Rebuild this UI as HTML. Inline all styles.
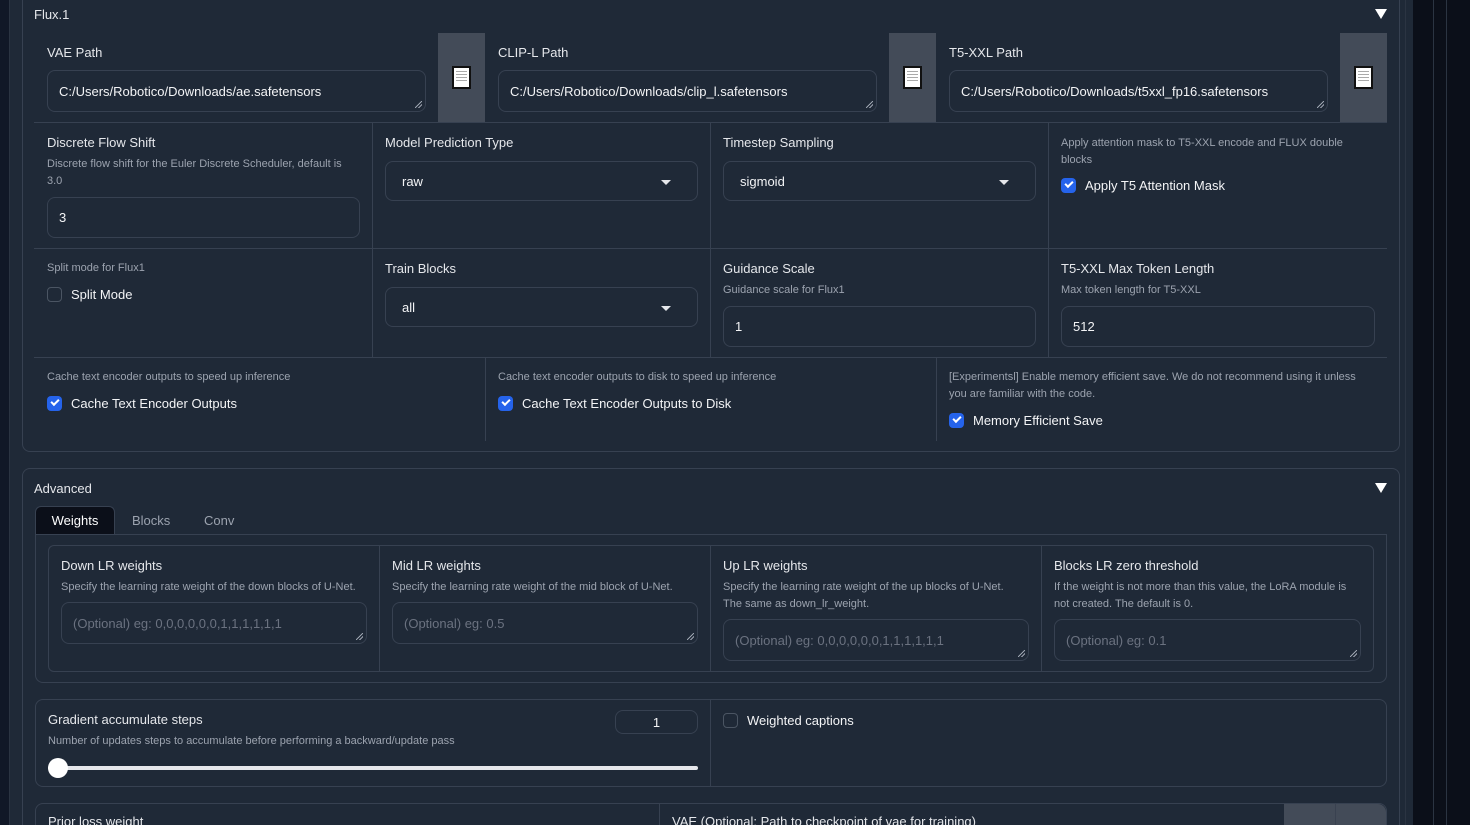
<!DOCTYPE html>
<html style="width:1470px;height:825px;overflow:hidden"><head><meta charset="utf-8"><style>
*{box-sizing:border-box;margin:0;padding:0}
body{width:1470px;height:825px;overflow:hidden;background:#1f2937;font-family:"Liberation Sans",sans-serif;color:#e5e7eb;position:relative}
.a{position:absolute}
.lbl{position:absolute;font-size:13px;color:#e5e7eb}
.info{position:absolute;font-size:11px;color:#9ca3af;line-height:17px;margin-top:2px}
.box{position:absolute;border:1px solid #374151;border-radius:8px;background:#1f2937}
.inp{position:absolute;border:1px solid #374151;border-radius:8px;background:#1f2937;font-size:13px;color:#f3f4f6;padding-left:11px;display:flex;align-items:center}
.ph{color:#6b7280}
.vl{position:absolute;width:1px;background:#374151}
.hl{position:absolute;height:1px;background:#374151}
.btn{position:absolute;background:#434b58;display:flex;align-items:center;justify-content:center}
.doc{width:19px;height:23px;background:#fff;border:2px solid #111;position:relative}
.doc:after{content:"";position:absolute;left:2px;right:2px;top:3px;height:12px;background:repeating-linear-gradient(#aaa 0 1px,transparent 1px 3px)}
.cb{position:absolute;width:15px;height:15px;border-radius:4px}
.on{background:#2563eb}
.on:after{content:"";position:absolute;left:4px;top:3px;width:6px;height:3px;border-left:2px solid #fff;border-bottom:2px solid #fff;transform:rotate(-45deg)}
.off{border:1px solid #4b5563}
.cl{position:absolute;font-size:13px;color:#f3f4f6}
.dd:after{content:"";position:absolute;right:26px;top:18px;border-left:5px solid transparent;border-right:5px solid transparent;border-top:5px solid #e5e7eb}
.rs:after{content:"";position:absolute;right:3px;bottom:3px;width:7px;height:7px;background:linear-gradient(135deg,transparent 45%,#9ca3af 45% 55%,transparent 55% 70%,#9ca3af 70% 80%,transparent 80%)}
.tri{position:absolute;border-left:6px solid transparent;border-right:6px solid transparent;border-top:10px solid #fff}
</style></head><body>
<div class="a" style="left:0;top:0;width:9px;height:825px;background:#111827"></div>
<div class="vl" style="left:9px;top:0;height:825px;background:#2b3442"></div>
<div class="a" style="left:1413px;top:0;width:57px;height:825px;background:#0b0f19"></div>
<div class="vl" style="left:1405px;top:0;height:825px;background:#2b3442"></div>
<div class="vl" style="left:1433px;top:0;height:825px;background:#2b3442"></div>
<div class="vl" style="left:1446px;top:0;height:825px;background:#2b3442"></div>

<div class="box" style="left:22px;top:-10px;width:1378px;height:462px"></div>
<div class="lbl" style="left:34px;top:7px">Flux.1</div>
<div class="tri" style="left:1375px;top:9px"></div>

<div class="lbl" style="left:47px;top:45px">VAE Path</div>
<div class="inp rs" style="left:47px;top:70px;width:379px;height:42px">C:/Users/Robotico/Downloads/ae.safetensors</div>
<div class="btn" style="left:438px;top:33px;width:47px;height:89px"><div class="doc"></div></div>
<div class="lbl" style="left:498px;top:45px">CLIP-L Path</div>
<div class="inp rs" style="left:498px;top:70px;width:379px;height:42px">C:/Users/Robotico/Downloads/clip_l.safetensors</div>
<div class="btn" style="left:889px;top:33px;width:47px;height:89px"><div class="doc"></div></div>
<div class="lbl" style="left:949px;top:45px">T5-XXL Path</div>
<div class="inp rs" style="left:949px;top:70px;width:379px;height:42px">C:/Users/Robotico/Downloads/t5xxl_fp16.safetensors</div>
<div class="btn" style="left:1340px;top:33px;width:47px;height:89px"><div class="doc"></div></div>

<div class="hl" style="left:34px;top:122px;width:1353px"></div>
<div class="vl" style="left:372px;top:122px;height:235px"></div>
<div class="vl" style="left:710px;top:122px;height:235px"></div>
<div class="vl" style="left:1048px;top:122px;height:235px"></div>

<div class="lbl" style="left:47px;top:135px">Discrete Flow Shift</div>
<div class="info" style="left:47px;top:154px;width:310px">Discrete flow shift for the Euler Discrete Scheduler, default is 3.0</div>
<div class="inp" style="left:47px;top:197px;width:313px;height:41px">3</div>
<div class="lbl" style="left:385px;top:135px">Model Prediction Type</div>
<div class="inp dd" style="left:385px;top:161px;width:313px;height:40px;padding-left:16px">raw</div>
<div class="lbl" style="left:723px;top:135px">Timestep Sampling</div>
<div class="inp dd" style="left:723px;top:161px;width:313px;height:40px;padding-left:16px">sigmoid</div>
<div class="info" style="left:1061px;top:133px;width:310px">Apply attention mask to T5-XXL encode and FLUX double blocks</div>
<div class="cb on" style="left:1061px;top:178px"></div>
<div class="cl" style="left:1085px;top:178px">Apply T5 Attention Mask</div>

<div class="hl" style="left:34px;top:248px;width:1353px"></div>
<div class="info" style="left:47px;top:258px">Split mode for Flux1</div>
<div class="cb off" style="left:47px;top:287px"></div>
<div class="cl" style="left:71px;top:287px">Split Mode</div>
<div class="lbl" style="left:385px;top:261px">Train Blocks</div>
<div class="inp dd" style="left:385px;top:287px;width:313px;height:40px;padding-left:16px">all</div>
<div class="lbl" style="left:723px;top:261px">Guidance Scale</div>
<div class="info" style="left:723px;top:280px">Guidance scale for Flux1</div>
<div class="inp" style="left:723px;top:306px;width:313px;height:41px">1</div>
<div class="lbl" style="left:1061px;top:261px">T5-XXL Max Token Length</div>
<div class="info" style="left:1061px;top:280px">Max token length for T5-XXL</div>
<div class="inp" style="left:1061px;top:306px;width:314px;height:41px">512</div>

<div class="hl" style="left:34px;top:357px;width:1353px"></div>
<div class="vl" style="left:485px;top:357px;height:84px"></div>
<div class="vl" style="left:936px;top:357px;height:84px"></div>
<div class="info" style="left:47px;top:367px">Cache text encoder outputs to speed up inference</div>
<div class="cb on" style="left:47px;top:396px"></div>
<div class="cl" style="left:71px;top:396px">Cache Text Encoder Outputs</div>
<div class="info" style="left:498px;top:367px">Cache text encoder outputs to disk to speed up inference</div>
<div class="cb on" style="left:498px;top:396px"></div>
<div class="cl" style="left:522px;top:396px">Cache Text Encoder Outputs to Disk</div>
<div class="info" style="left:949px;top:367px;width:420px">[Experimentsl] Enable memory efficient save. We do not recommend using it unless you are familiar with the code.</div>
<div class="cb on" style="left:949px;top:413px"></div>
<div class="cl" style="left:973px;top:413px">Memory Efficient Save</div>

<div class="box" style="left:22px;top:468px;width:1378px;height:357px;border-bottom:none;border-radius:8px 8px 0 0"></div>
<div class="lbl" style="left:34px;top:481px">Advanced</div>
<div class="tri" style="left:1375px;top:483px"></div>
<div class="a" style="left:35px;top:506px;width:80px;height:29px;background:#0b0f19;border:1px solid #374151;border-bottom:none;border-radius:6px 6px 0 0;font-size:13px;color:#fff;text-align:center;line-height:28px">Weights</div>
<div class="lbl" style="left:132px;top:513px;color:#9ca3af">Blocks</div>
<div class="lbl" style="left:204px;top:513px;color:#9ca3af">Conv</div>
<div class="a" style="left:35px;top:534px;width:1352px;height:149px;border:1px solid #374151;border-radius:0 0 8px 8px"></div>
<div class="a" style="left:48px;top:545px;width:1326px;height:127px;border:1px solid #374151;border-radius:6px"></div>
<div class="vl" style="left:379px;top:545px;height:126px"></div>
<div class="vl" style="left:710px;top:545px;height:126px"></div>
<div class="vl" style="left:1041px;top:545px;height:126px"></div>
<div class="lbl" style="left:61px;top:558px">Down LR weights</div>
<div class="info" style="left:61px;top:577px">Specify the learning rate weight of the down blocks of U-Net.</div>
<div class="inp rs ph" style="left:61px;top:602px;width:306px;height:42px">(Optional) eg: 0,0,0,0,0,0,1,1,1,1,1,1</div>
<div class="lbl" style="left:392px;top:558px">Mid LR weights</div>
<div class="info" style="left:392px;top:577px">Specify the learning rate weight of the mid block of U-Net.</div>
<div class="inp rs ph" style="left:392px;top:602px;width:306px;height:42px">(Optional) eg: 0.5</div>
<div class="lbl" style="left:723px;top:558px">Up LR weights</div>
<div class="info" style="left:723px;top:577px;width:300px">Specify the learning rate weight of the up blocks of U-Net. The same as down_lr_weight.</div>
<div class="inp rs ph" style="left:723px;top:619px;width:306px;height:42px">(Optional) eg: 0,0,0,0,0,0,1,1,1,1,1,1</div>
<div class="lbl" style="left:1054px;top:558px">Blocks LR zero threshold</div>
<div class="info" style="left:1054px;top:577px;width:310px">If the weight is not more than this value, the LoRA module is not created. The default is 0.</div>
<div class="inp rs ph" style="left:1054px;top:619px;width:307px;height:42px">(Optional) eg: 0.1</div>

<div class="a" style="left:35px;top:699px;width:1352px;height:88px;border:1px solid #374151;border-radius:8px"></div>
<div class="vl" style="left:710px;top:700px;height:86px"></div>
<div class="lbl" style="left:48px;top:712px">Gradient accumulate steps</div>
<div class="info" style="left:48px;top:731px">Number of updates steps to accumulate before performing a backward/update pass</div>
<div class="inp" style="left:615px;top:710px;width:83px;height:24px;justify-content:center;padding:0">1</div>
<div class="a" style="left:48px;top:766px;width:650px;height:4px;background:#e5e7eb;border-radius:2px"></div>
<div class="a" style="left:48px;top:758px;width:20px;height:20px;background:#fff;border-radius:50%"></div>
<div class="cb off" style="left:723px;top:713px"></div>
<div class="cl" style="left:747px;top:713px">Weighted captions</div>

<div class="a" style="left:35px;top:803px;width:1352px;height:22px;border:1px solid #374151;border-bottom:none;border-radius:8px 8px 0 0"></div>
<div class="vl" style="left:659px;top:804px;height:21px"></div>
<div class="lbl" style="left:48px;top:814px">Prior loss weight</div>
<div class="lbl" style="left:672px;top:814px">VAE (Optional: Path to checkpoint of vae for training)</div>
<div class="a" style="left:1284px;top:804px;width:102px;height:21px;background:#434b58;border-radius:0 8px 0 0"></div>
<div class="vl" style="left:1335px;top:804px;height:21px;background:#394150"></div>
</body></html>
